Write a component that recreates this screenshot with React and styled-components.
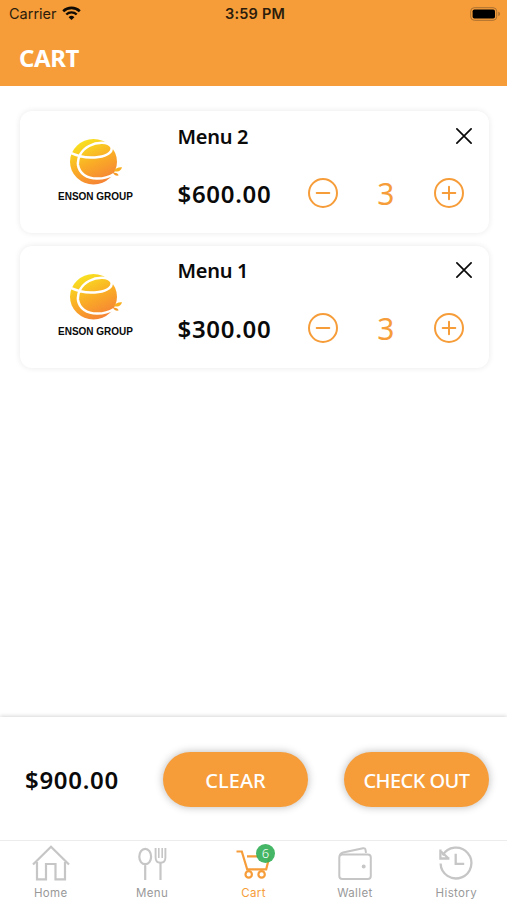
import React from "react";
import styled, { createGlobalStyle } from "styled-components";

const ORANGE = "#f69d3a";

const GlobalStyle = createGlobalStyle`
  * {
    box-sizing: border-box;
  }

  body {
    margin: 0;
    background: #fff;
    font-family: "Noto Sans", "Open Sans", sans-serif;
    color: #0a0a0a;
  }

  button {
    padding: 0;
    border: 0;
    background: none;
    font-family: inherit;
    cursor: pointer;
  }

  svg {
    display: block;
  }
`;

const Screen = styled.div`
  display: flex;
  flex-direction: column;
  width: 507px;
  height: 900px;
  overflow: hidden;
`;

const Header = styled.header`
  height: 86px;
  flex-shrink: 0;
  background: ${ORANGE};
`;

const StatusBar = styled.div`
  display: grid;
  grid-template-columns: 1fr auto 1fr;
  align-items: center;
  height: 27px;
  padding: 0 6px 0 9px;
  font-family: Inter, "Liberation Sans", sans-serif;
  font-size: 14.5px;
  color: #2b1c0b;
`;

const Carrier = styled.div`
  display: flex;
  align-items: center;
  gap: 5px;
`;

const Clock = styled.div`
  font-weight: 600;
  font-size: 14.5px;
  letter-spacing: 0.2px;
`;

const BatteryBox = styled.div`
  display: flex;
  justify-content: flex-end;
`;

const Title = styled.h1`
  margin: 0;
  padding: 14px 19px 0;
  font-size: 24px;
  line-height: 34px;
  font-weight: 700;
  letter-spacing: -0.4px;
  color: #fff;
`;

const CartList = styled.main`
  flex: 1;
  display: flex;
  flex-direction: column;
  gap: 12.5px;
  padding: 25px 18.5px 0 19.5px;
`;

const Card = styled.article`
  display: flex;
  height: 122px;
  border-radius: 12px;
  background: #fff;
  box-shadow: 0 0 6px rgba(0, 0, 0, 0.09);
`;

const Brand = styled.div`
  display: flex;
  flex-direction: column;
  align-items: center;
  width: 152px;
  padding-top: 27px;
`;

const BrandName = styled.div`
  margin-top: 5px;
  font-family: "Liberation Sans", Arial, sans-serif;
  font-size: 10px;
  line-height: 12px;
  font-weight: 700;
  white-space: nowrap;
`;

const Details = styled.div`
  flex: 1;
  padding: 11px 17px 0 6px;
`;

const DetailRow = styled.div`
  display: flex;
  align-items: center;
  justify-content: space-between;
  height: 27px;
`;

const ItemName = styled.div`
  padding-top: 2px;
  font-size: 20px;
  line-height: 28px;
  font-weight: 600;
  letter-spacing: -0.3px;
`;

const OrderRow = styled.div`
  display: flex;
  align-items: center;
  height: 32px;
  margin-top: 28px;
`;

const Price = styled.div`
  width: ${(props) => props.$width};
  padding-top: 2px;
  font-size: 24px;
  line-height: 32px;
  font-weight: 600;
  letter-spacing: 0.7px;
`;

const Stepper = styled.div`
  display: flex;
  align-items: center;
`;

const Quantity = styled.div`
  width: 93.5px;
  padding-top: 2px;
  font-size: 30px;
  line-height: 32px;
  font-weight: 400;
  text-align: center;
  color: ${ORANGE};
`;

const Summary = styled.section`
  display: flex;
  align-items: center;
  height: 123px;
  flex-shrink: 0;
  padding: 1px 18px 0 25px;
  background: #fff;
  box-shadow: 0 -1px 4px rgba(0, 0, 0, 0.16);
`;

const ActionButton = styled.button`
  width: 145px;
  height: 55px;
  padding-top: 2px;
  border-radius: 28px;
  background: ${ORANGE};
  box-shadow: 0 0 9px rgba(0, 0, 0, 0.28);
  font-size: 20px;
  font-weight: 500;
  letter-spacing: ${(props) => props.$spacing || "0"};
  color: #fff;

  & + & {
    margin-left: 36px;
  }
`;

const TabBar = styled.nav`
  display: grid;
  grid-template-columns: repeat(5, 1fr);
  height: 60px;
  flex-shrink: 0;
  border-top: 1px solid #ececec;
  background: #fff;
`;

const Tab = styled.a`
  display: flex;
  flex-direction: column;
  align-items: center;
  padding-top: 3px;
  font-family: Inter, "Liberation Sans", sans-serif;
  font-size: 11.5px;
  line-height: 14px;
  letter-spacing: 0.35px;
  color: ${(props) => (props.$active ? ORANGE : "#999")};
`;

const TabIcon = styled.div`
  position: relative;
  height: 42px;
  color: ${(props) => (props.$active ? ORANGE : "#c6c6c6")};
`;

const Badge = styled.span`
  position: absolute;
  top: 0;
  left: 22.5px;
  width: 19px;
  height: 19px;
  border-radius: 50%;
  background: rgba(52, 176, 88, 0.92);
  font-family: "Noto Sans", sans-serif;
  font-size: 13px;
  line-height: 19px;
  letter-spacing: 0;
  font-weight: 300;
  text-align: center;
  color: #fff;
`;

const Wifi = () => (
  <svg width="19" height="15" viewBox="0 0 19 15" fill="none" stroke="#100b04">
    <path d="M1.2 5.2a12 12 0 0 1 16.6 0" strokeWidth="2.6" />
    <path d="M4.3 8.5a7.5 7.5 0 0 1 10.4 0" strokeWidth="2.4" />
    <path d="M9.5 14 6.6 11.2a4.2 4.2 0 0 1 5.8 0z" fill="#100b04" stroke="none" />
  </svg>
);

const Battery = () => (
  <svg width="31" height="14" viewBox="0 0 31 14">
    <rect x=".7" y=".7" width="26" height="12.6" rx="3.6" fill="none" stroke="#a97030" />
    <rect x="2.6" y="2.5" width="22.4" height="9" rx="1.8" />
    <path d="M28.3 4.8c2.2.6 2.2 3.8 0 4.4z" fill="#a97030" />
  </svg>
);

const BrandMark = ({ id }) => (
  <svg width="54" height="48" viewBox="0 0 54 48" fill="none">
    <defs>
      <linearGradient id={id} x1="12" y1="3" x2="32" y2="46" gradientUnits="userSpaceOnUse">
        <stop stopColor="#f8e321" />
        <stop offset=".5" stopColor="#faae25" />
        <stop offset="1" stopColor="#f58236" />
      </linearGradient>
    </defs>
    <ellipse cx="24.5" cy="23.7" rx="23.5" ry="22.7" fill={`url(#${id})`} />
    <path
      d="M0 14.2C7 17.6 18 20.8 29.5 19 38.5 17.6 44.5 13.5 42.2 8.8 39.6 3.5 28.5 3.4 20 8 11.8 12.5 8.2 20 9 27 10.2 35.5 18 40.4 28 40.6c6.5.1 12.5-1.8 17-4.6"
      stroke="#fff"
      strokeWidth="2.5"
    />
    <path d="M41 42c3-2.2 5-5 6.2-8.5h7V48H36z" fill="#fff" />
    <path d="M45 33c1.4-2.8 4-3.9 8-3.7-.9 3.5-3.7 5.2-8 3.7z" fill="#f9b01e" />
    <path d="M44.3 35c2.5-.6 4.7.4 5.3 2.5-2.5.5-4.4-.3-5.3-2.5z" fill="#f49a25" />
  </svg>
);

const CloseIcon = () => (
  <svg width="16" height="16" viewBox="0 0 16 16" stroke="#0a0a0a" strokeWidth="1.7" strokeLinecap="round">
    <path d="m.9.9 14.2 14.2M15.1.9.9 15.1" />
  </svg>
);

const StepIcon = ({ plus }) => (
  <svg width="32" height="32" viewBox="0 0 32 32" fill="none" stroke={ORANGE} strokeWidth="2" strokeLinecap="round">
    <circle cx="16" cy="16" r="14" />
    <path d={plus ? "M9.7 16h12.6M16 9.7v12.6" : "M9.7 16h12.6"} />
  </svg>
);

const HomeIcon = () => (
  <svg width="40" height="38" viewBox="0 0 40 38" fill="none" stroke="currentColor" strokeWidth="2.2">
    <path d="M2 20.5 20 2.7l18 17.8" />
    <path d="M6 18v17.3h9V20h9.5v15.3H34V18" />
  </svg>
);

const MenuIcon = () => (
  <svg width="40" height="38" viewBox="0 0 40 38" fill="none" stroke="currentColor" strokeWidth="2.2">
    <path d="M13.2 20.5V36M13.2 4.8c-3.4 0-5.9 3.8-5.9 8s2.5 7.4 5.9 7.4 5.9-3.2 5.9-7.4-2.5-8-5.9-8z" />
    <path d="M23.6 4v9.5c0 3.6 1.8 5.3 4.9 5.3s4.9-1.7 4.9-5.3V4" strokeWidth="1.9" />
    <path d="M28.5 18.5V36" />
    <path d="M26.8 4v10M30.2 4v10" strokeWidth="1.6" />
  </svg>
);

const CartIcon = () => (
  <svg width="40" height="38" viewBox="0 0 40 38" fill="none" stroke="currentColor" strokeWidth="2.2">
    <path d="M3.5 7.5h5.3l5.4 17.8h19L36.5 12M14 12.3h11" />
    <circle cx="15.7" cy="30.4" r="3.2" />
    <circle cx="28.6" cy="30.4" r="3.2" />
  </svg>
);

const WalletIcon = () => (
  <svg width="40" height="38" viewBox="0 0 40 38" fill="none" stroke="currentColor" strokeWidth="2">
    <rect x="4.3" y="10.6" width="31.5" height="24.4" rx="3" />
    <path d="M4.8 12c0-2 1.6-3 3.3-3.5L28 4.2c1.6-.3 2.4.5 2.6 2.1l.4 2.5" />
    <circle cx="28.7" cy="22.6" r="1" fill="currentColor" />
  </svg>
);

const HistoryIcon = () => (
  <svg width="40" height="38" viewBox="0 0 40 38" fill="none" stroke="currentColor" strokeWidth="2.3">
    <path d="M4.6 19.5A15.4 15.4 0 1 0 6.6 11.4" />
    <path d="M4.4 5.5v9h9M12.6 14.5l-7.5-7" />
    <path d="M19.7 9.8v10h8.5" />
  </svg>
);

const items = [
  { id: 2, name: "Menu 2", price: "$600.00", quantity: 3 },
  { id: 1, name: "Menu 1", price: "$300.00", quantity: 3 },
];

const tabs = [
  { label: "Home", Icon: HomeIcon },
  { label: "Menu", Icon: MenuIcon },
  { label: "Cart", Icon: CartIcon, active: true, badge: 6 },
  { label: "Wallet", Icon: WalletIcon },
  { label: "History", Icon: HistoryIcon },
];

function CartItem({ item }) {
  return (
    <Card>
      <Brand>
        <BrandMark id={`brand-${item.id}`} />
        <BrandName>ENSON GROUP</BrandName>
      </Brand>
      <Details>
        <DetailRow>
          <ItemName>{item.name}</ItemName>
          <button aria-label="Remove">
            <CloseIcon />
          </button>
        </DetailRow>
        <OrderRow>
          <Price $width="129.5px">{item.price}</Price>
          <Stepper>
            <button aria-label="Decrease">
              <StepIcon />
            </button>
            <Quantity>{item.quantity}</Quantity>
            <button aria-label="Increase">
              <StepIcon plus />
            </button>
          </Stepper>
        </OrderRow>
      </Details>
    </Card>
  );
}

export default function App() {
  return (
    <>
      <GlobalStyle />
      <Screen>
        <Header>
          <StatusBar>
            <Carrier>
              Carrier
              <Wifi />
            </Carrier>
            <Clock>3:59 PM</Clock>
            <BatteryBox>
              <Battery />
            </BatteryBox>
          </StatusBar>
          <Title>CART</Title>
        </Header>
        <CartList>
          {items.map((item) => (
            <CartItem item={item} key={item.id} />
          ))}
        </CartList>
        <Summary>
          <Price $width="138px">$900.00</Price>
          <ActionButton>CLEAR</ActionButton>
          <ActionButton $spacing="-0.55px">CHECK OUT</ActionButton>
        </Summary>
        <TabBar>
          {tabs.map(({ label, Icon, active, badge }) => (
            <Tab $active={active} key={label}>
              <TabIcon $active={active}>
                <Icon />
                {badge && <Badge>{badge}</Badge>}
              </TabIcon>
              {label}
            </Tab>
          ))}
        </TabBar>
      </Screen>
    </>
  );
}
